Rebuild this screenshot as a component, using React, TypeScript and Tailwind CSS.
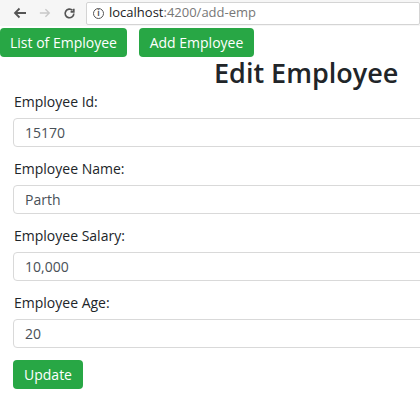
import React from "react";

const font = { fontFamily: '"Open Sans", "Noto Sans", sans-serif' };

const fields = [
  { label: "Employee Id:", value: "15170" },
  { label: "Employee Name:", value: "Parth" },
  { label: "Employee Salary:", value: "10,000" },
  { label: "Employee Age:", value: "20" },
];

const App = () => {
  return (
    <div className="w-[420px] h-[394px] overflow-hidden bg-white text-[#212529]" style={font}>
      {/* browser bar */}
      <div className="flex items-center h-[26px] bg-[#f6f6f6]">
        <svg className="ml-[13px]" width="14" height="12" viewBox="0 0 14 12" fill="none" stroke="#555" strokeWidth="1.8">
          <path d="M13 6H2M6.5 1.5 2 6l4.5 4.5" />
        </svg>
        <svg className="ml-[12px]" width="12" height="12" viewBox="0 0 14 12" fill="none" stroke="#c8c8c8" strokeWidth="1.6">
          <path d="M1 6h11M7.5 1.5 12 6l-4.5 4.5" />
        </svg>
        <svg className="ml-[12px]" width="13" height="13" viewBox="0 0 24 24" fill="none" stroke="#555" strokeWidth="3">
          <path d="M20 12a8 8 0 1 1-2.3-5.7" />
          <path d="M20 3v6h-6" />
        </svg>
        <div className="ml-[10px] flex items-center h-[23px] flex-1 bg-white border border-[#d4d4d4] rounded-[2px] pl-[6px] text-[13px]">
          <span className="flex items-center justify-center w-[11px] h-[11px] rounded-full border border-[#555] text-[8px] font-bold leading-none text-[#555]">i</span>
          <span className="ml-[5px] text-[#222]">localhost</span>
          <span className="text-[#777]">:4200/add-emp</span>
        </div>
      </div>

      {/* nav buttons */}
      <div className="flex mt-[2px] gap-[12px]">
        <button className="h-[29px] w-[127px] bg-[#28a745] text-white text-[14px] rounded-[4px]">List of Employee</button>
        <button className="h-[29px] w-[115px] bg-[#28a745] text-white text-[14px] rounded-[4px]">Add Employee</button>
      </div>

      <h2 className="pl-[214px] text-[27px] font-semibold leading-[32px]">Edit Employee</h2>

      <form className="w-[620px] pl-[13px] pt-[3px] flex flex-col gap-[12px]">
        {fields.map((f) => (
          <div key={f.label}>
            <label className="block pl-[1px] text-[14px] leading-[20px] mb-[6px]">{f.label}</label>
            <div className="h-[29px] border border-[#d9d9d9] rounded-[4px] flex items-center pl-[11px] text-[14px] text-[#495057]">
              {f.value}
            </div>
          </div>
        ))}
        <div>
          <button type="button" className="h-[29px] w-[70px] bg-[#28a745] text-white text-[14px] rounded-[4px]">
            Update
          </button>
        </div>
      </form>
    </div>
  );
};

export default App;
